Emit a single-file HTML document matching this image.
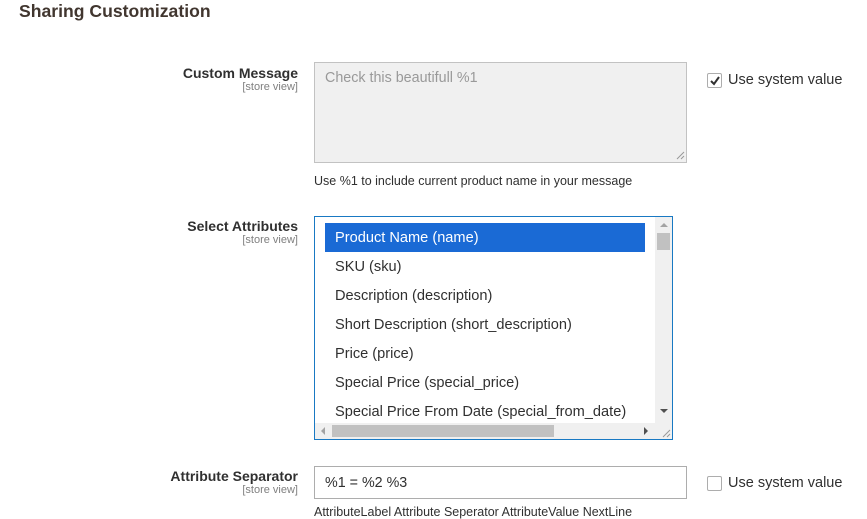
<!DOCTYPE html>
<html><head><style>
*{margin:0;padding:0;box-sizing:border-box}
body{width:867px;height:518px;background:#fff;font-family:"Liberation Sans",sans-serif;color:#303030;position:relative;overflow:hidden}
.a{position:absolute;white-space:nowrap}
.lbl{right:569px;text-align:right;font-weight:bold;font-size:14px;color:#303030}
.sv{right:569px;font-size:11px;color:#808080}
.opt{left:335px;font-size:14.6px;color:#303030}
.cb{position:absolute;width:15px;height:15px;border:1px solid #adadad;border-radius:2px;background:#fff}
.use{font-size:14.5px;color:#303030}
.note{font-size:12.5px;color:#303030}
</style></head><body>
<div class="a" style="left:19px;top:1px;font-size:17.6px;font-weight:bold;color:#41362f">Sharing Customization</div>

<div class="a lbl" style="top:65px">Custom Message</div>
<div class="a sv" style="top:81px">[store view]</div>
<div class="a" style="left:314px;top:62px;width:373px;height:101px;background:#f0f0f0;border:1px solid #c2c2c2"></div>
<div class="a" style="left:325px;top:70px;font-size:14.3px;color:#999">Check this beautifull %1</div>
<svg class="a" style="left:676px;top:151px" width="9" height="9"><path d="M8 1L1 8M8 5L5 8" stroke="#999" stroke-width="1"/></svg>
<div class="a note" style="left:314px;top:174px">Use %1 to include current product name in your message</div>
<div class="cb" style="left:707px;top:73px"></div>
<svg class="a" style="left:709px;top:75px" width="12" height="12"><path d="M2 6L5 9L10 2" stroke="#303030" stroke-width="2" fill="none"/></svg>
<div class="a use" style="left:728px;top:72px">Use system value</div>

<div class="a lbl" style="top:218px">Select Attributes</div>
<div class="a sv" style="top:234px">[store view]</div>
<div class="a" style="left:314px;top:216px;width:359px;height:224px;border:1px solid #1979c3;background:#fff"></div>
<div class="a" style="left:325px;top:223px;width:320px;height:29px;background:#1a6ad5"></div>
<div class="a opt" style="top:230px;color:#fff">Product Name (name)</div>
<div class="a opt" style="top:259px">SKU (sku)</div>
<div class="a opt" style="top:288px">Description (description)</div>
<div class="a opt" style="top:317px">Short Description (short_description)</div>
<div class="a opt" style="top:346px">Price (price)</div>
<div class="a opt" style="top:375px">Special Price (special_price)</div>
<div class="a opt" style="top:404px">Special Price From Date (special_from_date)</div>
<div class="a" style="left:655px;top:217px;width:17px;height:206px;background:#f0f0f0"></div>
<div class="a" style="left:657px;top:233px;width:13px;height:17px;background:#c1c1c1"></div>
<div class="a" style="left:660px;top:223px;width:0;height:0;border-left:4px solid transparent;border-right:4px solid transparent;border-bottom:4px solid #a3a3a3"></div>
<div class="a" style="left:660px;top:409px;width:0;height:0;border-left:4px solid transparent;border-right:4px solid transparent;border-top:4px solid #505050"></div>
<div class="a" style="left:315px;top:423px;width:357px;height:16px;background:#f0f0f0"></div>
<div class="a" style="left:332px;top:425px;width:222px;height:12px;background:#c1c1c1"></div>
<div class="a" style="left:321px;top:427px;width:0;height:0;border-top:4px solid transparent;border-bottom:4px solid transparent;border-right:4px solid #a3a3a3"></div>
<div class="a" style="left:644px;top:427px;width:0;height:0;border-top:4px solid transparent;border-bottom:4px solid transparent;border-left:4px solid #505050"></div>
<svg class="a" style="left:662px;top:429px" width="9" height="9"><path d="M8 1L1 8M8 5L5 8" stroke="#999" stroke-width="1"/></svg>

<div class="a lbl" style="top:468px">Attribute Separator</div>
<div class="a sv" style="top:484px">[store view]</div>
<div class="a" style="left:314px;top:466px;width:373px;height:33px;border:1px solid #adadad;background:#fff"></div>
<div class="a" style="left:325px;top:475px;font-size:14.3px;color:#303030">%1 = %2 %3</div>
<div class="a note" style="left:314px;top:505px">AttributeLabel Attribute Seperator AttributeValue NextLine</div>
<div class="cb" style="left:707px;top:476px"></div>
<div class="a use" style="left:728px;top:475px">Use system value</div>
</body></html>
